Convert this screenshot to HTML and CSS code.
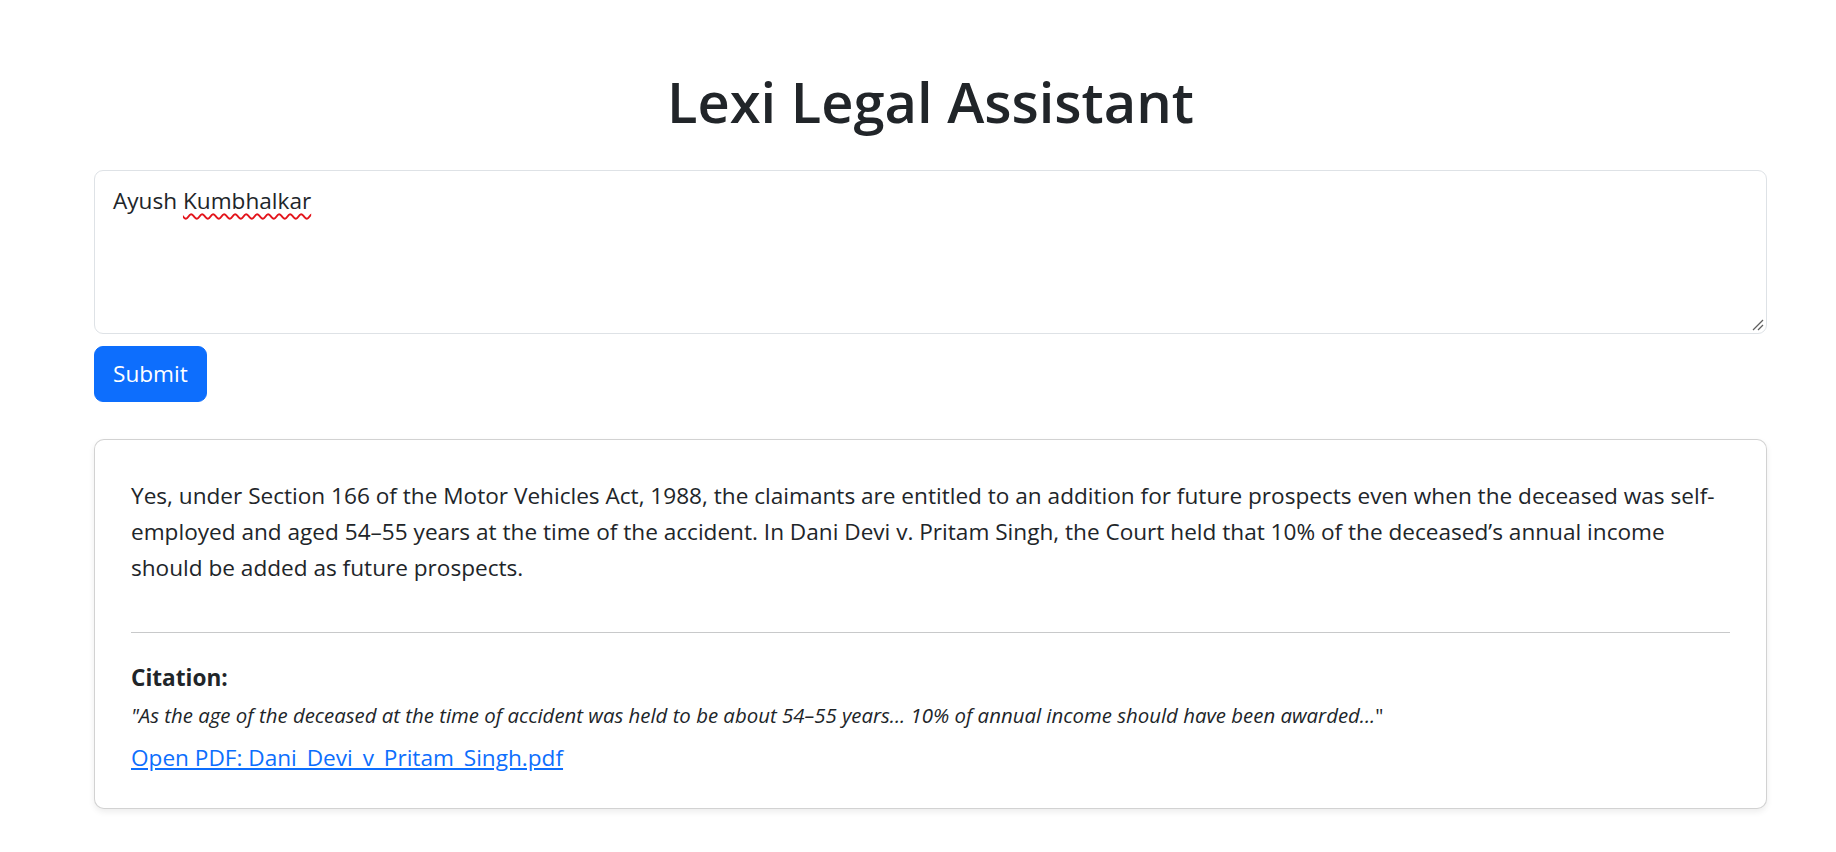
FILE: index.html
```html
<!DOCTYPE html>
<html lang="en">
<head>
<meta charset="utf-8">
<title>Lexi Legal Assistant</title>
<link rel="stylesheet" href="styles.css">
</head>
<body>
<main class="page">
  <h1 class="title">Lexi Legal Assistant</h1>
  <div class="query" role="textbox" aria-multiline="true">Ayush <span class="misspelled">Kumbhalkar</span>
    <svg class="resize-grip" width="12" height="12" viewBox="0 0 12 12" aria-hidden="true">
      <line x1="1" y1="11" x2="11" y2="1" stroke="#5f5f5f" stroke-width="1.3"/>
      <line x1="6" y1="11" x2="11" y2="6" stroke="#5f5f5f" stroke-width="1.3"/>
    </svg>
  </div>
  <button class="btn-submit" type="button">Submit</button>
  <section class="answer-card">
    <p class="answer">Yes, under Section 166 of the Motor Vehicles Act, 1988, the claimants are entitled to an addition for future prospects even when the deceased was self-employed and aged 54–55 years at the time of the accident. In Dani Devi v. Pritam Singh, the Court held that 10% of the deceased’s annual income should be added as future prospects.</p>
    <hr class="divider">
    <div class="citation">
      <div class="citation-label">Citation:</div>
      <p class="quote"><em>"As the age of the deceased at the time of accident was held to be about 54–55 years... 10% of annual income should have been awarded...</em>"</p>
      <a class="pdf-link" href="#">Open PDF: Dani_Devi_v_Pritam_Singh.pdf</a>
    </div>
  </section>
</main>
</body>
</html>
```
FILE: styles.css
```css
* { box-sizing: border-box; }

html, body {
  margin: 0;
  background: #ffffff;
}

body {
  font-family: "Open Sans", "Noto Sans", "Liberation Sans", sans-serif;
  font-size: 22.6px;
  line-height: 36px;
  color: #212529;
}

.page {
  margin: 0 69px 0 94px;
  padding-top: 65px;
  padding-bottom: 40px;
}

.title {
  margin: 0 0 33px;
  font-size: 56px;
  line-height: 72px;
  font-weight: 600;
  text-align: center;
  color: #212529;
}

.query {
  position: relative;
  height: 164px;
  padding: 12px 18px 6px;
  border: 1px solid #dee2e6;
  border-radius: 9px;
  background: #fff;
  font-size: 22.6px;
  line-height: 36px;
  color: #212529;
}

.misspelled {
  text-decoration: underline wavy #e3141b;
  text-decoration-thickness: 1.5px;
  text-underline-offset: 4px;
}

.resize-grip {
  position: absolute;
  right: 2px;
  bottom: 2px;
}

.btn-submit {
  display: block;
  margin-top: 12px;
  padding: 9px 18px;
  border: 1px solid #0d6efd;
  border-radius: 9px;
  background: #0d6efd;
  color: #fff;
  font-family: inherit;
  font-size: 22.6px;
  line-height: 36px;
  cursor: pointer;
}

.answer-card {
  margin-top: 37px;
  padding: 38px 36px 32px;
  border: 1px solid rgba(0, 0, 0, 0.175);
  border-radius: 10px;
  background: #fff;
  box-shadow: 0 3px 6px rgba(0, 0, 0, 0.075);
}

.answer {
  margin: 0;
}

.divider {
  margin: 46px 0 27px;
  border: 0;
  border-top: 1px solid #c8c9ca;
}

.citation-label {
  font-weight: 700;
}

.quote {
  margin: 4px 0 8px;
  font-size: 20.4px;
  line-height: 31.5px;
}

.pdf-link {
  color: #0d6efd;
  text-decoration: underline;
}
```
